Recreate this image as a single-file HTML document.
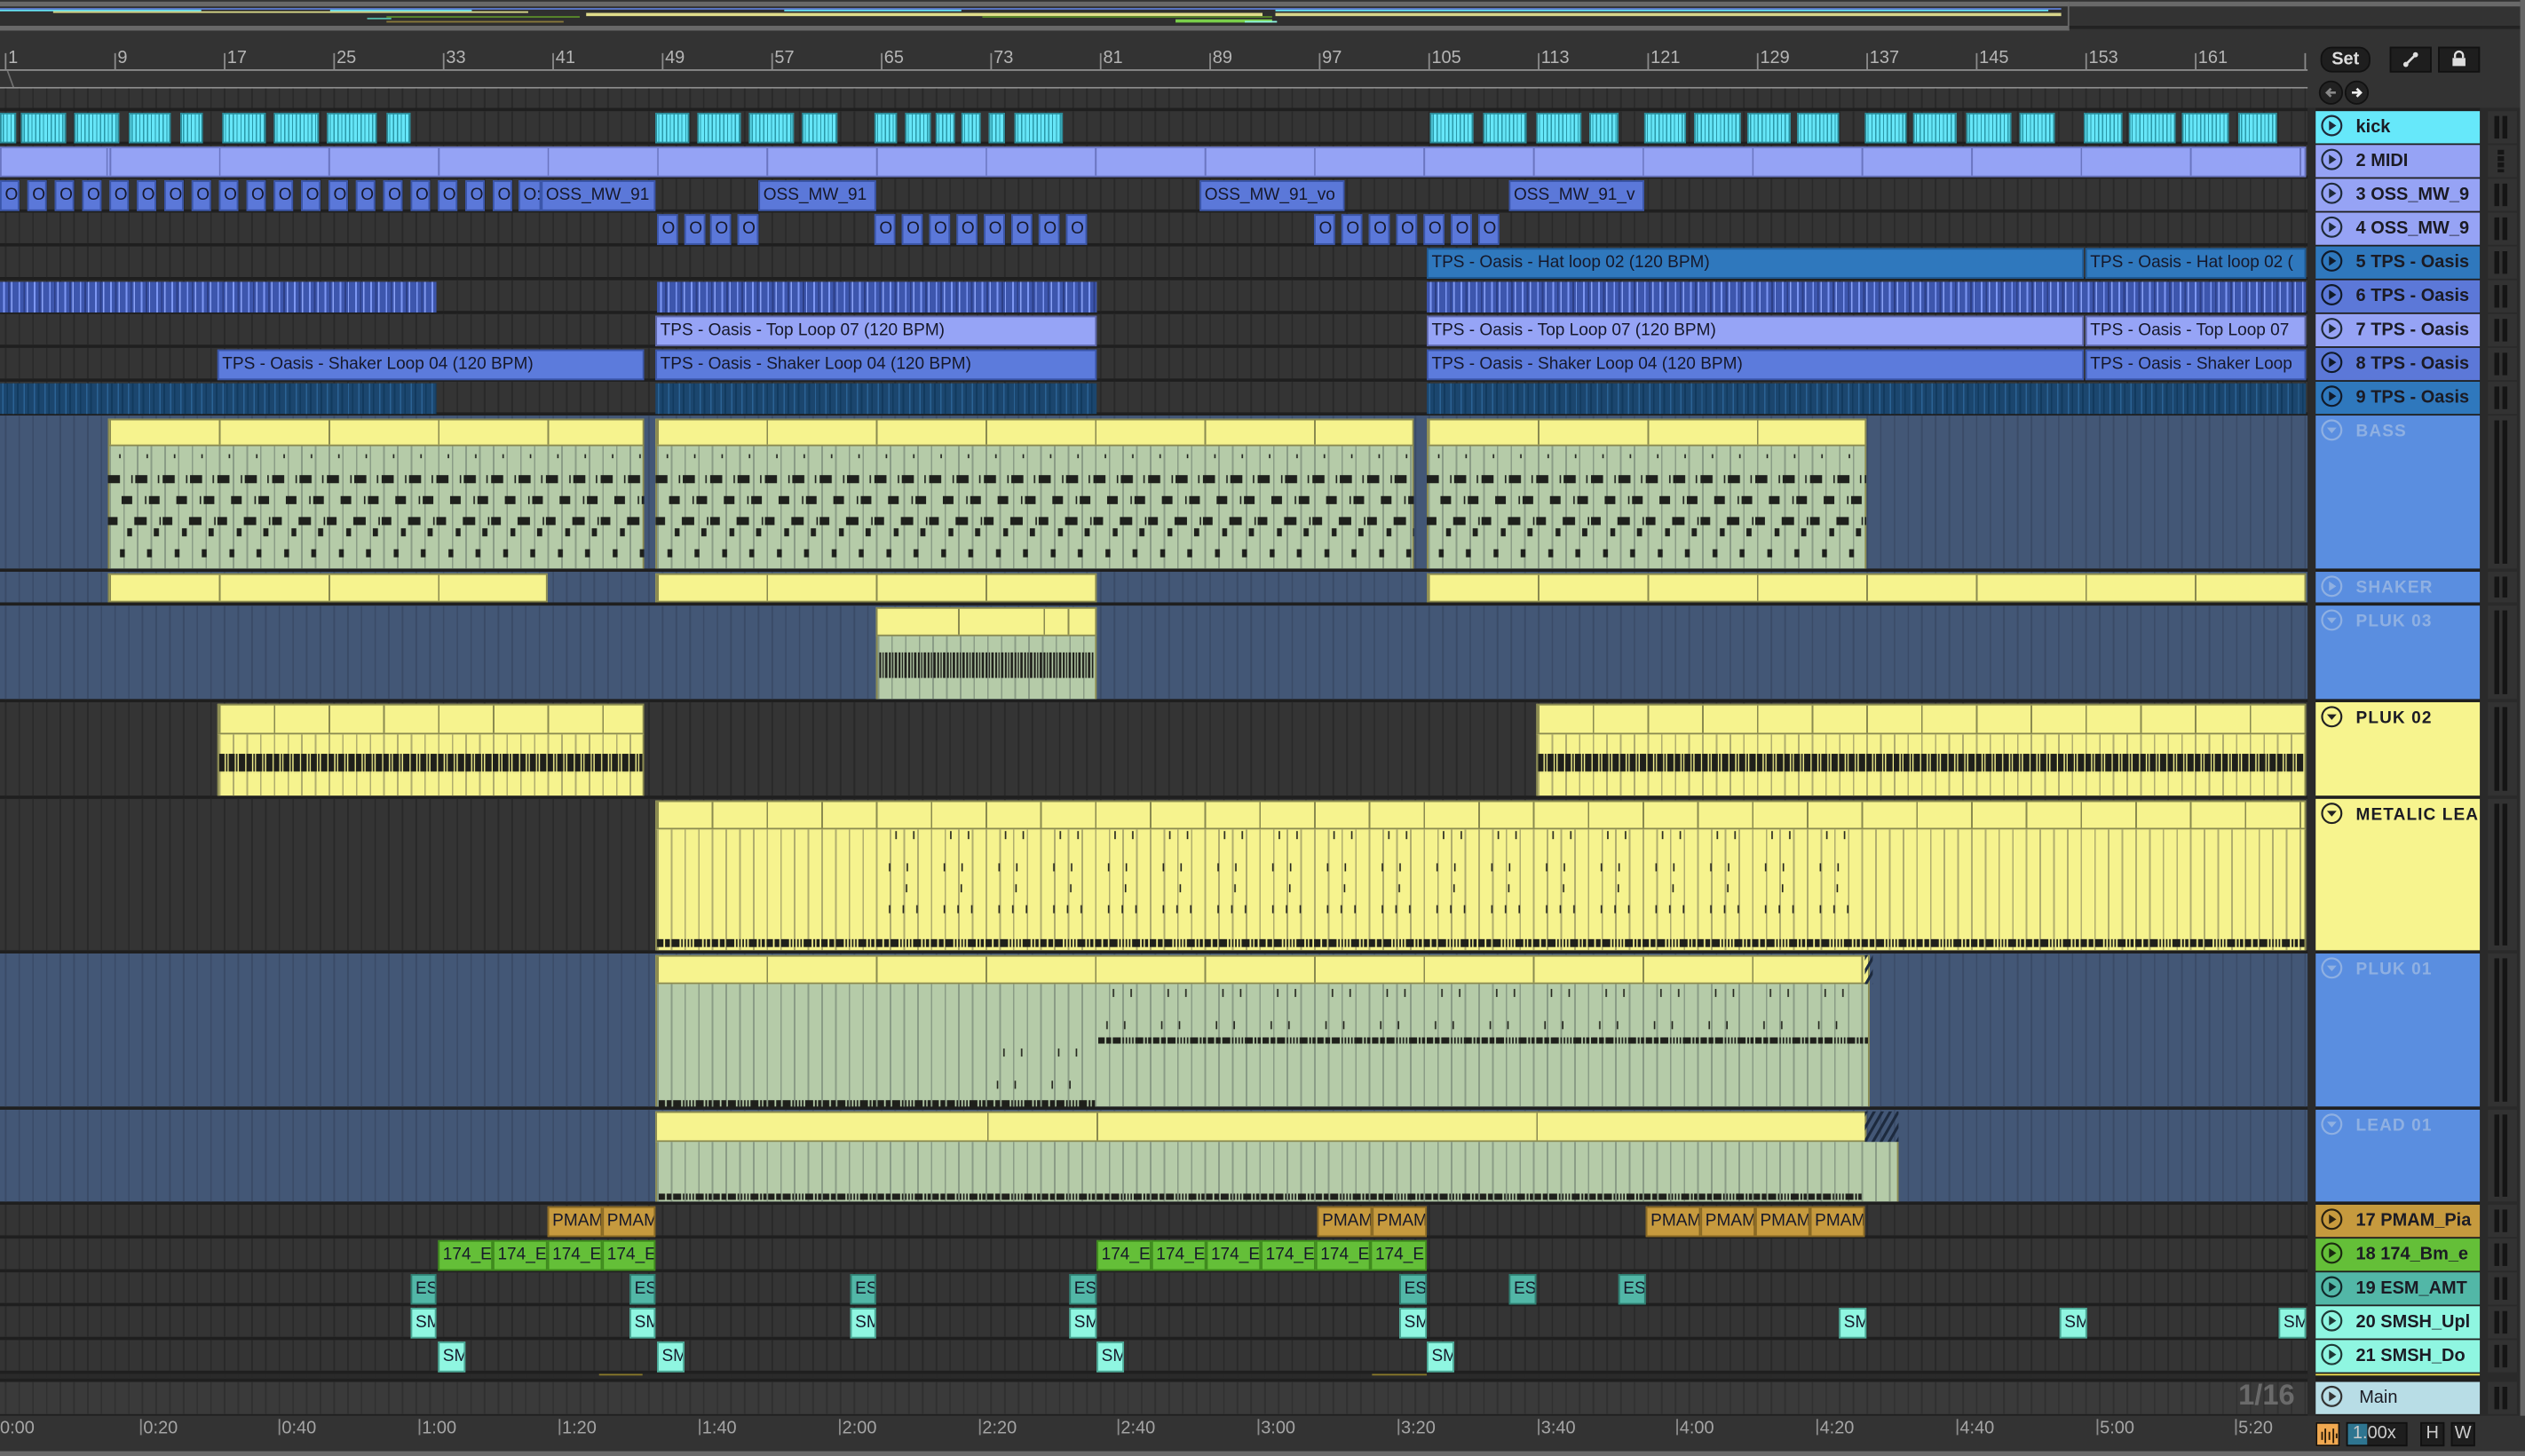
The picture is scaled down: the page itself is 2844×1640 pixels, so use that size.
<!DOCTYPE html>
<html><head><meta charset="utf-8"><style>
html,body{margin:0;padding:0;background:#2c2c2c;overflow:hidden;width:2844px;height:1640px}
#s{position:absolute;left:0;top:0;width:1568px;height:904px;transform:scale(1.81378,1.81416);transform-origin:0 0;font-family:"Liberation Sans",sans-serif;background:#2b2b2b;overflow:hidden}
.a{position:absolute}
.ln{position:absolute;left:0;width:1433px;background-color:#343434;background-image:repeating-linear-gradient(90deg,#292929 0 1px,transparent 1px 8.5px);background-position:3px 0}
.lb{position:absolute;left:0;width:1433px;background-color:#435776;background-image:repeating-linear-gradient(90deg,#3a4b67 0 1px,transparent 1px 8.5px);background-position:3px 0}
.c{position:absolute;box-sizing:border-box;font-size:10.5px;line-height:17px;color:#16182a;white-space:nowrap;overflow:hidden;padding-left:2px;height:19px}
.k{position:absolute;height:19px;background:repeating-linear-gradient(90deg,#66e6f8 0 1.7px,#2b98a8 1.7px 2.4px);box-shadow:inset 0 0 0 1px #2a8a98}
.o3{background:#5b78d9;border:1px solid #3a55a8}
.lav{background:#96a4f6;border:1px solid #5c66a8}
.tb{background:#2f78bd;border:1px solid #1f5a94}
.mb8{background:#5c7bdc;border:1px solid #3a55a8}
.w6{position:absolute;height:19px;background-color:#3d56ad;background-image:repeating-linear-gradient(90deg,transparent 0 2px,#7d97f2 2px 3px,transparent 3px 5px,#2c3f86 5px 6px,transparent 6px 7px,#8aa2f6 7px 7.8px,transparent 7.8px 9.5px)}
.w9{position:absolute;height:19px;background-color:#1b466e;background-image:repeating-linear-gradient(90deg,transparent 0 1.5px,#2b6294 1.5px 2.3px,transparent 2.3px 4px,#123a5e 4px 5px,transparent 5px 6.5px)}
.yh{position:absolute;box-sizing:border-box;background-color:#f6f38e;border:1px solid #8a8a50;background-image:repeating-linear-gradient(90deg,#8a8a50 0 1px,transparent 1px 68px)}
.gb{position:absolute;box-sizing:border-box;background-color:#b5cba8;border-left:1px solid #8a8a50;border-right:1px solid #8a8a50;background-image:repeating-linear-gradient(90deg,#8a9c86 0 1px,transparent 1px 8.5px)}
.yb{position:absolute;box-sizing:border-box;background-color:#f6f38e;border-left:1px solid #8a8a50;border-right:1px solid #8a8a50;background-image:repeating-linear-gradient(90deg,#b0ad6e 0 1px,transparent 1px 8.5px)}
.hd{position:absolute;left:1438px;width:102px;box-sizing:border-box;font-size:11px;font-weight:bold;color:#1b1b24;padding-left:25px;line-height:17px;white-space:nowrap;overflow:hidden}
.hd svg{position:absolute;left:3px;top:2px}
.hg{color:#8fb0e2;letter-spacing:.6px;font-size:10.5px}
.hy{letter-spacing:.6px;font-size:10.5px}
.rs{position:absolute;left:1545px;width:18px;background:#323232}
.rs i{position:absolute;top:3px;bottom:3px;width:3px;background:#151515}
.pm{background:#c69a3e;border:1px solid #8a6a25}
.g18{background:#64bf38;border:1px solid #3f8a1e}
.es{background:#52b7a7;border:1px solid #2f7f72}
.sm{background:#8ff6e1;border:1px solid #4aa896}
.rl{position:absolute;top:30px;font-size:11px;color:#b5b5b5}
.tk{position:absolute;top:33px;height:10px;width:1px;background:#8a8a8a}
.tl{position:absolute;top:881px;font-size:11px;color:#a5a5a5}
.tt{position:absolute;top:881px;height:10px;width:1px;background:#8a8a8a}
</style></head><body><div id="s">
<svg width="0" height="0" style="position:absolute"><defs>
<pattern id="pBass" width="34" height="76" patternUnits="userSpaceOnUse">
<g fill="#1e201c"><rect x="7" y="5" width=".9" height="2.5"/><rect x="24" y="5" width=".9" height="2.5"/>
<rect x="0" y="18" width="7.5" height="5"/><rect x="14.5" y="18" width=".9" height="5"/><rect x="17" y="18" width="7.5" height="5"/><rect x="31" y="18" width=".9" height="5"/>
<rect x="8.5" y="31" width="6.6" height="5"/><rect x="23" y="31" width=".9" height="5"/><rect x="25.5" y="31" width="6.6" height="5"/>
<rect x="16.4" y="44" width="7.7" height="5"/><rect x="32" y="44" width=".9" height="5"/><rect x="0" y="44" width="6" height="5"/>
<rect x="28.5" y="51" width="3.2" height="5"/><rect x="12" y="51" width="3" height="5"/>
<rect x="24.3" y="64" width="3" height="5"/><rect x="7.5" y="64" width="3" height="5"/></g></pattern>
<pattern id="pMet" width="34" height="76" patternUnits="userSpaceOnUse">
<g fill="#23241d"><rect x="5" y="3" width=".9" height="5"/><rect x="16" y="3" width=".9" height="5"/>
<rect x="1" y="23" width=".9" height="5"/><rect x="12" y="23" width=".9" height="5"/>
<rect x="11.5" y="36" width=".9" height="5"/>
<rect x="1" y="49" width=".9" height="5"/><rect x="9.5" y="49" width=".9" height="5"/><rect x="18" y="49" width=".9" height="5"/></g></pattern>
<pattern id="pBand" width="34" height="6" patternUnits="userSpaceOnUse">
<g fill="#1f201b"><rect x="0" y="0" width="4" height="5"/><rect x="5" y="0" width="3" height="5"/><rect x="9" y="0" width="5" height="5"/><rect x="15" y="0" width="1" height="5"/><rect x="17" y="0" width="1" height="5"/><rect x="19" y="0" width="1" height="5"/><rect x="21" y="0" width="1" height="5"/><rect x="23" y="0" width="5" height="5"/><rect x="29" y="0" width="1.2" height="5"/><rect x="31" y="0" width="2" height="5"/></g></pattern>
<pattern id="pBand2" width="17" height="12" patternUnits="userSpaceOnUse">
<g fill="#1f201b"><rect x="0" y="0" width="3.5" height="11"/><rect x="4.3" y="0" width="1" height="11"/><rect x="6" y="0" width="3.8" height="11"/><rect x="10.5" y="0" width="1" height="11"/><rect x="12.3" y="0" width="4" height="11"/></g></pattern>
<pattern id="pDense" width="6" height="16" patternUnits="userSpaceOnUse">
<g fill="#1f201b"><rect x="0" y="0" width="1.2" height="16"/><rect x="2" y="0" width=".8" height="16"/><rect x="3.6" y="0" width="1.5" height="16"/></g></pattern>
<pattern id="pHat" width="5" height="22" patternUnits="userSpaceOnUse" patternTransform="skewX(-30)"><rect width="2" height="22" fill="#1d2a3e"/></pattern>
</defs></svg>

<!-- overview -->
<div class="a" style="left:0;top:0;width:1568px;height:67px;background:#333"></div>
<div class="a" style="left:0;top:1;width:1285px;height:18px;top:1px;background:#2f2f2f;border-top:3px solid #696969;border-bottom:3px solid #696969;box-sizing:border-box;border-right:1px solid #696969"></div>
<div class="a" style="left:1285px;top:1px;width:280px;height:3px;background:#696969"></div>
<div class="a" style="left:1285px;top:16px;width:283px;height:2px;background:#222"></div>
<div class="a" style="left:0;top:5px;width:1280px;height:1px;background:#5b7ad0"></div>
<div class="a" style="left:0;top:6px;width:125px;height:1px;background:#66e5f8"></div>
<div class="a" style="left:205px;top:6px;width:88px;height:1px;background:#66e5f8"></div>
<div class="a" style="left:487px;top:6px;width:110px;height:1px;background:#66e5f8"></div>
<div class="a" style="left:792px;top:6px;width:480px;height:1px;background:#66e5f8"></div>
<div class="a" style="left:33px;top:7px;width:295px;height:1px;background:#dada8a"></div>
<div class="a" style="left:364px;top:8px;width:420px;height:2px;background:#e0dc8a"></div>
<div class="a" style="left:792px;top:8px;width:488px;height:2px;background:#d8d48a"></div>
<div class="a" style="left:240px;top:10px;width:120px;height:1px;background:#5a8a2a"></div>
<div class="a" style="left:610px;top:10px;width:180px;height:1px;background:#5a8a2a"></div>
<div class="a" style="left:240px;top:13px;width:110px;height:1px;background:#8a7a3a"></div>
<div class="a" style="left:730px;top:12px;width:60px;height:2px;background:#7ad04a"></div>
<div class="a" style="left:228px;top:11px;width:15px;height:1px;background:#52b7a7"></div>
<div class="a" style="left:773px;top:13px;width:20px;height:1px;background:#8ff6e1"></div>

<!-- ruler -->
<div class="a" style="left:0;top:43px;width:1433px;height:1px;background:#8c8c8c"></div>
<div class="a" style="left:0;top:54px;width:1433px;height:1px;background:#8c8c8c"></div>
<div class="a" style="left:0;top:44px;width:6px;height:10px;border-right:1px solid #999;transform:skewX(20deg);opacity:.6"></div>
<div class="ln" style="top:55px;height:12px"></div>
<div class="tk" style="left:3px"></div><div class="rl" style="left:5px">1</div>
<div class="tk" style="left:71px"></div><div class="rl" style="left:73px">9</div>
<div class="tk" style="left:139px"></div><div class="rl" style="left:141px">17</div>
<div class="tk" style="left:207px"></div><div class="rl" style="left:209px">25</div>
<div class="tk" style="left:275px"></div><div class="rl" style="left:277px">33</div>
<div class="tk" style="left:343px"></div><div class="rl" style="left:345px">41</div>
<div class="tk" style="left:411px"></div><div class="rl" style="left:413px">49</div>
<div class="tk" style="left:479px"></div><div class="rl" style="left:481px">57</div>
<div class="tk" style="left:547px"></div><div class="rl" style="left:549px">65</div>
<div class="tk" style="left:615px"></div><div class="rl" style="left:617px">73</div>
<div class="tk" style="left:683px"></div><div class="rl" style="left:685px">81</div>
<div class="tk" style="left:751px"></div><div class="rl" style="left:753px">89</div>
<div class="tk" style="left:819px"></div><div class="rl" style="left:821px">97</div>
<div class="tk" style="left:887px"></div><div class="rl" style="left:889px">105</div>
<div class="tk" style="left:955px"></div><div class="rl" style="left:957px">113</div>
<div class="tk" style="left:1023px"></div><div class="rl" style="left:1025px">121</div>
<div class="tk" style="left:1091px"></div><div class="rl" style="left:1093px">129</div>
<div class="tk" style="left:1159px"></div><div class="rl" style="left:1161px">137</div>
<div class="tk" style="left:1227px"></div><div class="rl" style="left:1229px">145</div>
<div class="tk" style="left:1295px"></div><div class="rl" style="left:1297px">153</div>
<div class="tk" style="left:1363px"></div><div class="rl" style="left:1365px">161</div>
<div class="tk" style="left:1431px"></div>

<!-- top right controls -->
<div class="a" style="left:1441px;top:29px;width:29px;height:14px;border-radius:7px;background:#1e1e1e;border:1px solid #111;color:#ddd;font-size:11px;font-weight:bold;text-align:center;line-height:14px">Set</div>
<div class="a" style="left:1484px;top:29px;width:24px;height:14px;background:#1e1e1e;border:1px solid #111"><svg width="24" height="14"><line x1="9" y1="10" x2="15" y2="4" stroke="#ddd" stroke-width="1.5"/><circle cx="9" cy="10" r="1.6" fill="#ddd"/><circle cx="15" cy="4" r="1.6" fill="#ddd"/></svg></div>
<div class="a" style="left:1514px;top:29px;width:24px;height:14px;background:#1e1e1e;border:1px solid #111"><svg width="24" height="14"><rect x="8" y="6" width="8" height="5" fill="#ddd"/><path d="M9.5 6 V4.5 a2.5 2.5 0 0 1 5 0 V6" stroke="#ddd" stroke-width="1.3" fill="none"/></svg></div>
<div class="a" style="left:1440px;top:50px;width:13px;height:13px;border-radius:50%;background:#222;border:1px solid #111"><svg width="13" height="13"><path d="M9.5 6.5 H4 M6.5 4 L4 6.5 L6.5 9" stroke="#888" stroke-width="1.5" fill="none"/></svg></div>
<div class="a" style="left:1456px;top:50px;width:13px;height:13px;border-radius:50%;background:#222;border:1px solid #111"><svg width="13" height="13"><path d="M3.5 6.5 H9 M6.5 4 L9 6.5 L6.5 9" stroke="#eee" stroke-width="1.5" fill="none"/></svg></div>

<!-- area background behind lanes -->
<div class="a" style="left:0;top:67px;width:1568px;height:812px;background:#1f1f1f"></div>
<div class="a" style="left:1433px;top:67px;width:5px;height:812px;background:#2a2a2a"></div>

<!-- lanes -->
<div class="ln" style="top:69px;height:19px"></div>
<div class="ln" style="top:90px;height:19px"></div>
<div class="ln" style="top:111px;height:19px"></div>
<div class="ln" style="top:132px;height:19px"></div>
<div class="ln" style="top:153px;height:19px"></div>
<div class="ln" style="top:174px;height:19px"></div>
<div class="ln" style="top:195px;height:19px"></div>
<div class="ln" style="top:216px;height:19px"></div>
<div class="ln" style="top:237px;height:19px"></div>
<div class="lb" style="top:258px;height:95px"></div>
<div class="lb" style="top:355px;height:19px"></div>
<div class="lb" style="top:376px;height:58px"></div>
<div class="ln" style="top:436px;height:58px"></div>
<div class="ln" style="top:496px;height:94px"></div>
<div class="lb" style="top:592px;height:95px"></div>
<div class="lb" style="top:689px;height:57px"></div>
<div class="ln" style="top:748px;height:19px"></div>
<div class="ln" style="top:769px;height:19px"></div>
<div class="ln" style="top:790px;height:19px"></div>
<div class="ln" style="top:811px;height:19px"></div>
<div class="ln" style="top:832px;height:19px"></div>
<div class="ln" style="top:853px;height:3px;background-color:#2a2a2a"></div>
<div class="ln" style="top:858px;height:20px;background-color:#3a3a3a;background-image:repeating-linear-gradient(90deg,#303030 0 1px,transparent 1px 8.5px)"></div>
<div class="a" style="left:372px;top:853px;width:27px;height:1px;background:#8a7a2a"></div>
<div class="a" style="left:852px;top:853px;width:34px;height:1px;background:#8a7a2a"></div>

<!-- kick -->
<div class="k" style="top:70px;left:0;width:10px"></div><div class="k" style="top:70px;left:13px;width:28px"></div><div class="k" style="top:70px;left:46px;width:28px"></div><div class="k" style="top:70px;left:80px;width:26px"></div><div class="k" style="top:70px;left:112px;width:14px"></div><div class="k" style="top:70px;left:138px;width:27px"></div><div class="k" style="top:70px;left:170px;width:28px"></div><div class="k" style="top:70px;left:203px;width:31px"></div><div class="k" style="top:70px;left:240px;width:15px"></div>
<div class="k" style="top:70px;left:407px;width:21px"></div><div class="k" style="top:70px;left:433px;width:27px"></div><div class="k" style="top:70px;left:465px;width:28px"></div><div class="k" style="top:70px;left:498px;width:22px"></div><div class="k" style="top:70px;left:543px;width:14px"></div><div class="k" style="top:70px;left:562px;width:16px"></div><div class="k" style="top:70px;left:581px;width:12px"></div><div class="k" style="top:70px;left:597px;width:12px"></div><div class="k" style="top:70px;left:614px;width:10px"></div><div class="k" style="top:70px;left:630px;width:30px"></div>
<div class="k" style="top:70px;left:888px;width:27px"></div><div class="k" style="top:70px;left:921px;width:27px"></div><div class="k" style="top:70px;left:954px;width:28px"></div><div class="k" style="top:70px;left:987px;width:18px"></div><div class="k" style="top:70px;left:1021px;width:26px"></div><div class="k" style="top:70px;left:1052px;width:29px"></div><div class="k" style="top:70px;left:1085px;width:27px"></div><div class="k" style="top:70px;left:1116px;width:26px"></div><div class="k" style="top:70px;left:1158px;width:26px"></div><div class="k" style="top:70px;left:1188px;width:27px"></div><div class="k" style="top:70px;left:1221px;width:28px"></div><div class="k" style="top:70px;left:1254px;width:22px"></div><div class="k" style="top:70px;left:1294px;width:24px"></div><div class="k" style="top:70px;left:1322px;width:29px"></div><div class="k" style="top:70px;left:1355px;width:29px"></div><div class="k" style="top:70px;left:1390px;width:24px"></div>

<!-- 2 MIDI -->
<div class="c" style="top:91px;left:0;width:1432px;background-color:#95a3f5;border:1px solid #6a75c0;background-image:repeating-linear-gradient(90deg,#6a75c0 0 1px,transparent 1px 68px);background-position:67px 0"></div>

<!-- 3 OSS -->
<div class="c o3" style="top:112px;left:0;width:12px">O:</div>
<div class="c o3" style="top:112px;left:17px;width:12px">O:</div>
<div class="c o3" style="top:112px;left:34px;width:12px">O:</div>
<div class="c o3" style="top:112px;left:51px;width:12px">O:</div>
<div class="c o3" style="top:112px;left:68px;width:12px">O:</div>
<div class="c o3" style="top:112px;left:85px;width:12px">O:</div>
<div class="c o3" style="top:112px;left:102px;width:12px">O:</div>
<div class="c o3" style="top:112px;left:119px;width:12px">O:</div>
<div class="c o3" style="top:112px;left:136px;width:12px">O</div>
<div class="c o3" style="top:112px;left:153px;width:12px">O:</div>
<div class="c o3" style="top:112px;left:170px;width:12px">O</div>
<div class="c o3" style="top:112px;left:187px;width:12px">O:</div>
<div class="c o3" style="top:112px;left:204px;width:12px">O</div>
<div class="c o3" style="top:112px;left:221px;width:12px">O:</div>
<div class="c o3" style="top:112px;left:238px;width:12px">O</div>
<div class="c o3" style="top:112px;left:255px;width:12px">O:</div>
<div class="c o3" style="top:112px;left:272px;width:12px">O</div>
<div class="c o3" style="top:112px;left:289px;width:12px">O:</div>
<div class="c o3" style="top:112px;left:306px;width:12px">O</div>
<div class="c o3" style="top:112px;left:322px;width:14px">O:</div>
<div class="c o3" style="top:112px;left:336px;width:71px">OSS_MW_91</div>
<div class="c o3" style="top:112px;left:471px;width:73px">OSS_MW_91</div>
<div class="c o3" style="top:112px;left:745px;width:90px">OSS_MW_91_vo</div>
<div class="c o3" style="top:112px;left:937px;width:84px">OSS_MW_91_v</div>

<!-- 4 OSS -->
<div class="c o3" style="top:133px;left:408px;width:13px">O:</div>
<div class="c o3" style="top:133px;left:425px;width:13px">O</div>
<div class="c o3" style="top:133px;left:441px;width:13px">O:</div>
<div class="c o3" style="top:133px;left:458px;width:13px">O</div>
<div class="c o3" style="top:133px;left:543px;width:13px">O:</div>
<div class="c o3" style="top:133px;left:560px;width:13px">O</div>
<div class="c o3" style="top:133px;left:577px;width:13px">O:</div>
<div class="c o3" style="top:133px;left:594px;width:13px">O</div>
<div class="c o3" style="top:133px;left:611px;width:13px">O:</div>
<div class="c o3" style="top:133px;left:628px;width:13px">O</div>
<div class="c o3" style="top:133px;left:645px;width:13px">O:</div>
<div class="c o3" style="top:133px;left:662px;width:13px">O:</div>
<div class="c o3" style="top:133px;left:816px;width:13px">O</div>
<div class="c o3" style="top:133px;left:833px;width:13px">O:</div>
<div class="c o3" style="top:133px;left:850px;width:13px">O</div>
<div class="c o3" style="top:133px;left:867px;width:13px">O:</div>
<div class="c o3" style="top:133px;left:884px;width:13px">O</div>
<div class="c o3" style="top:133px;left:901px;width:13px">O</div>
<div class="c o3" style="top:133px;left:918px;width:13px">O</div>

<!-- 5 -->
<div class="c tb" style="top:154px;left:886px;width:408px">TPS - Oasis - Hat loop 02 (120 BPM)</div>
<div class="c tb" style="top:154px;left:1295px;width:137px">TPS - Oasis - Hat loop 02 (</div>
<!-- 6 -->
<div class="w6" style="top:175px;left:0;width:271px"></div>
<div class="w6" style="top:175px;left:408px;width:273px"></div>
<div class="w6" style="top:175px;left:886px;width:546px"></div>
<!-- 7 -->
<div class="c lav" style="top:196px;left:407px;width:274px">TPS - Oasis - Top Loop 07 (120 BPM)</div>
<div class="c lav" style="top:196px;left:886px;width:408px">TPS - Oasis - Top Loop 07 (120 BPM)</div>
<div class="c lav" style="top:196px;left:1295px;width:137px">TPS - Oasis - Top Loop 07</div>
<!-- 8 -->
<div class="c mb8" style="top:217px;left:135px;width:265px">TPS - Oasis - Shaker Loop 04 (120 BPM)</div>
<div class="c mb8" style="top:217px;left:407px;width:274px">TPS - Oasis - Shaker Loop 04 (120 BPM)</div>
<div class="c mb8" style="top:217px;left:886px;width:408px">TPS - Oasis - Shaker Loop 04 (120 BPM)</div>
<div class="c mb8" style="top:217px;left:1295px;width:137px">TPS - Oasis - Shaker Loop</div>
<!-- 9 -->
<div class="w9" style="top:238px;left:0;width:271px"></div>
<div class="w9" style="top:238px;left:407px;width:274px"></div>
<div class="w9" style="top:238px;left:886px;width:546px"></div>

<!-- BASS -->
<div class="yh" style="left:67px;top:260px;width:333px;height:17px"></div>
<div class="gb" style="left:67px;top:277px;width:333px;height:76px"></div>
<svg class="a" style="left:67px;top:277px" width="333" height="76"><rect width="333" height="76" fill="url(#pBass)"/></svg>
<div class="yh" style="left:407px;top:260px;width:471px;height:17px"></div>
<div class="gb" style="left:407px;top:277px;width:471px;height:76px"></div>
<svg class="a" style="left:407px;top:277px" width="471" height="76"><rect width="471" height="76" fill="url(#pBass)"/></svg>
<div class="yh" style="left:886px;top:260px;width:273px;height:17px"></div>
<div class="gb" style="left:886px;top:277px;width:273px;height:76px"></div>
<svg class="a" style="left:886px;top:277px" width="273" height="76"><rect width="273" height="76" fill="url(#pBass)"/></svg>

<!-- SHAKER -->
<div class="yh" style="left:67px;top:356px;width:273px;height:18px"></div>
<div class="yh" style="left:407px;top:356px;width:274px;height:18px"></div>
<div class="yh" style="left:886px;top:356px;width:546px;height:18px"></div>

<!-- PLUK 03 -->
<div class="yh" style="left:544px;top:377px;width:137px;height:18px;background-image:linear-gradient(90deg,transparent 0 50px,#8a8a50 50px 51px,transparent 51px 103px,#8a8a50 103px 104px,transparent 104px 118px,#8a8a50 118px 119px,transparent 119px)"></div>
<div class="gb" style="left:544px;top:395px;width:137px;height:39px"></div>
<svg class="a" style="left:546px;top:405px" width="133" height="16"><rect width="133" height="16" fill="url(#pDense)"/></svg>

<!-- PLUK 02 -->
<div class="yh" style="left:135px;top:437px;width:265px;height:19px;background-image:repeating-linear-gradient(90deg,#8a8a50 0 1px,transparent 1px 34px)"></div>
<div class="yb" style="left:135px;top:456px;width:265px;height:38px"></div>
<svg class="a" style="left:136px;top:468px" width="263" height="12"><rect width="263" height="12" fill="url(#pBand2)"/></svg>
<div class="yh" style="left:954px;top:437px;width:478px;height:19px;background-image:repeating-linear-gradient(90deg,#8a8a50 0 1px,transparent 1px 34px)"></div>
<div class="yb" style="left:954px;top:456px;width:478px;height:38px"></div>
<svg class="a" style="left:955px;top:468px" width="476" height="12"><rect width="476" height="12" fill="url(#pBand2)"/></svg>

<!-- METALIC -->
<div class="yh" style="left:407px;top:497px;width:1025px;height:18px;background-image:repeating-linear-gradient(90deg,#8a8a50 0 1px,transparent 1px 34px)"></div>
<div class="yb" style="left:407px;top:515px;width:1025px;height:75px"></div>
<svg class="a" style="left:551px;top:513px" width="330" height="76"><rect width="330" height="76" fill="url(#pMet)"/></svg>
<svg class="a" style="left:891px;top:513px" width="262" height="76"><rect width="262" height="76" fill="url(#pMet)"/></svg>
<svg class="a" style="left:408px;top:583px" width="1023" height="6"><rect width="1023" height="6" fill="url(#pBand)"/></svg>

<!-- PLUK 01 -->
<div class="yh" style="left:407px;top:593px;width:754px;height:18px"></div>
<div class="gb" style="left:407px;top:611px;width:754px;height:76px"></div>
<svg class="a" style="left:686px;top:611px" width="473" height="30"><rect width="473" height="30" fill="url(#pMet)"/></svg>
<svg class="a" style="left:682px;top:644px" width="478" height="4"><rect width="478" height="4" fill="url(#pBand)"/></svg>
<svg class="a" style="left:618px;top:648px" width="62" height="30"><rect width="62" height="30" fill="url(#pMet)"/></svg>
<svg class="a" style="left:409px;top:683px" width="272" height="5"><rect width="272" height="5" fill="url(#pBand)"/></svg>
<svg class="a" style="left:1158px;top:593px" width="5" height="18"><rect width="5" height="18" fill="url(#pHat)"/></svg>

<!-- LEAD 01 -->
<div class="yh" style="left:407px;top:690px;width:752px;height:19px;background-image:linear-gradient(90deg,transparent 0 205px,#8a8a50 205px 206px,transparent 206px 273px,#8a8a50 273px 274px,transparent 274px 546px,#8a8a50 546px 547px,transparent 547px)"></div>
<div class="gb" style="left:407px;top:709px;width:772px;height:37px"></div>
<svg class="a" style="left:1158px;top:690px" width="21" height="19"><rect width="21" height="19" fill="url(#pHat)"/></svg>
<svg class="a" style="left:409px;top:741px" width="748" height="4"><rect width="748" height="4" fill="url(#pBand)"/></svg>

<!-- 17 PMAM -->
<div class="c pm" style="top:749px;left:340px;width:34px">PMAM</div>
<div class="c pm" style="top:749px;left:374px;width:33px">PMAM</div>
<div class="c pm" style="top:749px;left:818px;width:34px">PMAM</div>
<div class="c pm" style="top:749px;left:852px;width:34px">PMAM</div>
<div class="c pm" style="top:749px;left:1022px;width:34px">PMAM</div>
<div class="c pm" style="top:749px;left:1056px;width:34px">PMAM</div>
<div class="c pm" style="top:749px;left:1090px;width:34px">PMAM</div>
<div class="c pm" style="top:749px;left:1124px;width:34px">PMAM</div>
<!-- 18 -->
<div class="c g18" style="top:770px;left:272px;width:34px">174_E</div>
<div class="c g18" style="top:770px;left:306px;width:34px">174_E</div>
<div class="c g18" style="top:770px;left:340px;width:34px">174_E</div>
<div class="c g18" style="top:770px;left:374px;width:33px">174_E</div>
<div class="c g18" style="top:770px;left:681px;width:34px">174_E</div>
<div class="c g18" style="top:770px;left:715px;width:34px">174_E</div>
<div class="c g18" style="top:770px;left:749px;width:34px">174_E</div>
<div class="c g18" style="top:770px;left:783px;width:34px">174_E</div>
<div class="c g18" style="top:770px;left:817px;width:34px">174_E</div>
<div class="c g18" style="top:770px;left:851px;width:35px">174_E</div>
<!-- 19 -->
<div class="c es" style="top:791px;left:255px;width:16px">ES</div>
<div class="c es" style="top:791px;left:391px;width:16px">ES</div>
<div class="c es" style="top:791px;left:528px;width:16px">ES</div>
<div class="c es" style="top:791px;left:664px;width:17px">ES</div>
<div class="c es" style="top:791px;left:869px;width:17px">ES</div>
<div class="c es" style="top:791px;left:937px;width:17px">ES</div>
<div class="c es" style="top:791px;left:1005px;width:17px">ES</div>
<!-- 20 -->
<div class="c sm" style="top:812px;left:255px;width:16px">SM</div>
<div class="c sm" style="top:812px;left:391px;width:16px">SM</div>
<div class="c sm" style="top:812px;left:528px;width:16px">SM</div>
<div class="c sm" style="top:812px;left:664px;width:17px">SM</div>
<div class="c sm" style="top:812px;left:869px;width:17px">SM</div>
<div class="c sm" style="top:812px;left:1142px;width:17px">SM</div>
<div class="c sm" style="top:812px;left:1279px;width:17px">SM</div>
<div class="c sm" style="top:812px;left:1415px;width:17px">SM</div>
<!-- 21 -->
<div class="c sm" style="top:833px;left:272px;width:17px">SM</div>
<div class="c sm" style="top:833px;left:408px;width:17px">SM</div>
<div class="c sm" style="top:833px;left:681px;width:17px">SM</div>
<div class="c sm" style="top:833px;left:886px;width:17px">SM</div>

<div class="a" style="left:1390px;top:856px;font-size:18px;font-weight:bold;color:#6a6a6a">1/16</div>

<!-- headers -->
<div class="hd" style="top:69px;height:20px;background:#66e8fa;line-height:20px"><svg width="14" height="14"><circle cx="7" cy="7" r="6" fill="none" stroke="#1e2a3a" stroke-width="1.2"/><path d="M5.3 4 L9.8 7 L5.3 10Z" fill="#1e2a3a"/></svg>kick</div>
<div class="hd" style="top:90px;height:20px;background:#96a3f5;line-height:20px"><svg width="14" height="14"><circle cx="7" cy="7" r="6" fill="none" stroke="#1e2a3a" stroke-width="1.2"/><path d="M5.3 4 L9.8 7 L5.3 10Z" fill="#1e2a3a"/></svg>2 MIDI</div>
<div class="hd" style="top:111px;height:20px;background:#96a3f5;line-height:20px"><svg width="14" height="14"><circle cx="7" cy="7" r="6" fill="none" stroke="#1e2a3a" stroke-width="1.2"/><path d="M5.3 4 L9.8 7 L5.3 10Z" fill="#1e2a3a"/></svg>3 OSS_MW_9</div>
<div class="hd" style="top:132px;height:20px;background:#96a3f5;line-height:20px"><svg width="14" height="14"><circle cx="7" cy="7" r="6" fill="none" stroke="#1e2a3a" stroke-width="1.2"/><path d="M5.3 4 L9.8 7 L5.3 10Z" fill="#1e2a3a"/></svg>4 OSS_MW_9</div>
<div class="hd" style="top:153px;height:20px;background:#2f78bd;line-height:20px"><svg width="14" height="14"><circle cx="7" cy="7" r="6" fill="none" stroke="#101a2a" stroke-width="1.2"/><path d="M5.3 4 L9.8 7 L5.3 10Z" fill="#101a2a"/></svg>5 TPS - Oasis</div>
<div class="hd" style="top:174px;height:20px;background:#5c78d8;line-height:20px"><svg width="14" height="14"><circle cx="7" cy="7" r="6" fill="none" stroke="#101a2a" stroke-width="1.2"/><path d="M5.3 4 L9.8 7 L5.3 10Z" fill="#101a2a"/></svg>6 TPS - Oasis</div>
<div class="hd" style="top:195px;height:20px;background:#96a3f5;line-height:20px"><svg width="14" height="14"><circle cx="7" cy="7" r="6" fill="none" stroke="#1e2a3a" stroke-width="1.2"/><path d="M5.3 4 L9.8 7 L5.3 10Z" fill="#1e2a3a"/></svg>7 TPS - Oasis</div>
<div class="hd" style="top:216px;height:20px;background:#5c78d8;line-height:20px"><svg width="14" height="14"><circle cx="7" cy="7" r="6" fill="none" stroke="#101a2a" stroke-width="1.2"/><path d="M5.3 4 L9.8 7 L5.3 10Z" fill="#101a2a"/></svg>8 TPS - Oasis</div>
<div class="hd" style="top:237px;height:20px;background:#2f78bd;line-height:20px"><svg width="14" height="14"><circle cx="7" cy="7" r="6" fill="none" stroke="#101a2a" stroke-width="1.2"/><path d="M5.3 4 L9.8 7 L5.3 10Z" fill="#101a2a"/></svg>9 TPS - Oasis</div>
<div class="hd hg" style="top:258px;height:95px;background:#5a8ee0;line-height:20px"><svg width="14" height="14"><circle cx="7" cy="7" r="6" fill="none" stroke="#8fb0e2" stroke-width="1.2"/><path d="M4 5.5 L10 5.5 L7 9Z" fill="#8fb0e2"/></svg>BASS</div>
<div class="hd hg" style="top:355px;height:19px;background:#5a8ee0;line-height:20px"><svg width="14" height="14"><circle cx="7" cy="7" r="6" fill="none" stroke="#8fb0e2" stroke-width="1.2"/><path d="M5.3 4 L9.8 7 L5.3 10Z" fill="#8fb0e2"/></svg>SHAKER</div>
<div class="hd hg" style="top:376px;height:58px;background:#5a8ee0;line-height:20px"><svg width="14" height="14"><circle cx="7" cy="7" r="6" fill="none" stroke="#8fb0e2" stroke-width="1.2"/><path d="M4 5.5 L10 5.5 L7 9Z" fill="#8fb0e2"/></svg>PLUK 03</div>
<div class="hd hy" style="top:436px;height:58px;background:#f7f48e;line-height:20px"><svg width="14" height="14"><circle cx="7" cy="7" r="6" fill="none" stroke="#222" stroke-width="1.2"/><path d="M4 5.5 L10 5.5 L7 9Z" fill="#222"/></svg>PLUK 02</div>
<div class="hd hy" style="top:496px;height:94px;background:#f7f48e;line-height:20px"><svg width="14" height="14"><circle cx="7" cy="7" r="6" fill="none" stroke="#222" stroke-width="1.2"/><path d="M4 5.5 L10 5.5 L7 9Z" fill="#222"/></svg>METALIC LEA</div>
<div class="hd hg" style="top:592px;height:95px;background:#5a8ee0;line-height:20px"><svg width="14" height="14"><circle cx="7" cy="7" r="6" fill="none" stroke="#8fb0e2" stroke-width="1.2"/><path d="M4 5.5 L10 5.5 L7 9Z" fill="#8fb0e2"/></svg>PLUK 01</div>
<div class="hd hg" style="top:689px;height:57px;background:#5a8ee0;line-height:20px"><svg width="14" height="14"><circle cx="7" cy="7" r="6" fill="none" stroke="#8fb0e2" stroke-width="1.2"/><path d="M4 5.5 L10 5.5 L7 9Z" fill="#8fb0e2"/></svg>LEAD 01</div>
<div class="hd" style="top:748px;height:20px;background:#c69a3e;line-height:20px"><svg width="14" height="14"><circle cx="7" cy="7" r="6" fill="none" stroke="#2a2210" stroke-width="1.2"/><path d="M5.3 4 L9.8 7 L5.3 10Z" fill="#2a2210"/></svg>17 PMAM_Pia</div>
<div class="hd" style="top:769px;height:20px;background:#64bf38;line-height:20px"><svg width="14" height="14"><circle cx="7" cy="7" r="6" fill="none" stroke="#1a2a10" stroke-width="1.2"/><path d="M5.3 4 L9.8 7 L5.3 10Z" fill="#1a2a10"/></svg>18 174_Bm_e</div>
<div class="hd" style="top:790px;height:20px;background:#52b7a7;line-height:20px"><svg width="14" height="14"><circle cx="7" cy="7" r="6" fill="none" stroke="#10292a" stroke-width="1.2"/><path d="M5.3 4 L9.8 7 L5.3 10Z" fill="#10292a"/></svg>19 ESM_AMT</div>
<div class="hd" style="top:811px;height:20px;background:#8ff6e1;line-height:20px"><svg width="14" height="14"><circle cx="7" cy="7" r="6" fill="none" stroke="#1e3a36" stroke-width="1.2"/><path d="M5.3 4 L9.8 7 L5.3 10Z" fill="#1e3a36"/></svg>20 SMSH_Upl</div>
<div class="hd" style="top:832px;height:20px;background:#8ff6e1;line-height:20px"><svg width="14" height="14"><circle cx="7" cy="7" r="6" fill="none" stroke="#1e3a36" stroke-width="1.2"/><path d="M5.3 4 L9.8 7 L5.3 10Z" fill="#1e3a36"/></svg>21 SMSH_Do</div>
<div class="a" style="left:1438px;top:853px;width:102px;height:1px;background:#f0e050"></div>
<div class="hd" style="top:858px;height:20px;background:#b8dde6;line-height:20px;font-weight:normal;padding-left:27px"><svg width="14" height="14"><circle cx="7" cy="7" r="6" fill="none" stroke="#333" stroke-width="1.2"/><path d="M5.3 4 L9.8 7 L5.3 10Z" fill="#333"/></svg>Main</div>

<!-- right strip -->
<div class="a" style="left:1540px;top:67px;width:28px;height:812px;background:#2a2a2a"></div>
<div class="rs" style="top:69px;height:20px"><i style="left:4px"></i><i style="left:9px"></i></div>
<div class="rs" style="top:90px;height:20px"><i style="left:6px;width:4px;background:repeating-linear-gradient(#151515 0 3px,transparent 3px 4px)"></i></div>
<div class="rs" style="top:111px;height:20px"><i style="left:4px"></i><i style="left:9px"></i></div>
<div class="rs" style="top:132px;height:20px"><i style="left:4px"></i><i style="left:9px"></i></div>
<div class="rs" style="top:153px;height:20px"><i style="left:4px"></i><i style="left:9px"></i></div>
<div class="rs" style="top:174px;height:20px"><i style="left:4px"></i><i style="left:9px"></i></div>
<div class="rs" style="top:195px;height:20px"><i style="left:4px"></i><i style="left:9px"></i></div>
<div class="rs" style="top:216px;height:20px"><i style="left:4px"></i><i style="left:9px"></i></div>
<div class="rs" style="top:237px;height:20px"><i style="left:4px"></i><i style="left:9px"></i></div>
<div class="rs" style="top:258px;height:95px"><i style="left:4px"></i><i style="left:9px"></i></div>
<div class="rs" style="top:355px;height:19px"><i style="left:4px"></i><i style="left:9px"></i></div>
<div class="rs" style="top:376px;height:58px"><i style="left:4px"></i><i style="left:9px"></i></div>
<div class="rs" style="top:436px;height:58px"><i style="left:4px"></i><i style="left:9px"></i></div>
<div class="rs" style="top:496px;height:94px"><i style="left:4px"></i><i style="left:9px"></i></div>
<div class="rs" style="top:592px;height:95px"><i style="left:4px"></i><i style="left:9px"></i></div>
<div class="rs" style="top:689px;height:57px"><i style="left:4px"></i><i style="left:9px"></i></div>
<div class="rs" style="top:748px;height:20px"><i style="left:4px"></i><i style="left:9px"></i></div>
<div class="rs" style="top:769px;height:20px"><i style="left:4px"></i><i style="left:9px"></i></div>
<div class="rs" style="top:790px;height:20px"><i style="left:4px"></i><i style="left:9px"></i></div>
<div class="rs" style="top:811px;height:20px"><i style="left:4px"></i><i style="left:9px"></i></div>
<div class="rs" style="top:832px;height:20px"><i style="left:4px"></i><i style="left:9px"></i></div>
<div class="rs" style="top:858px;height:20px"><i style="left:4px"></i><i style="left:9px"></i></div>
<div class="a" style="left:1565px;top:0;width:3px;height:904px;background:#666"></div>

<!-- bottom time ruler -->
<div class="a" style="left:0;top:879px;width:1568px;height:25px;background:#333"></div>
<div class="a" style="left:0;top:901px;width:1568px;height:3px;background:#6a6a6a"></div>
<div class="tl" style="left:0">0:00</div>
<div class="tt" style="left:87px"></div><div class="tl" style="left:89px">0:20</div>
<div class="tt" style="left:173px"></div><div class="tl" style="left:175px">0:40</div>
<div class="tt" style="left:260px"></div><div class="tl" style="left:262px">1:00</div>
<div class="tt" style="left:347px"></div><div class="tl" style="left:349px">1:20</div>
<div class="tt" style="left:434px"></div><div class="tl" style="left:436px">1:40</div>
<div class="tt" style="left:521px"></div><div class="tl" style="left:523px">2:00</div>
<div class="tt" style="left:608px"></div><div class="tl" style="left:610px">2:20</div>
<div class="tt" style="left:694px"></div><div class="tl" style="left:696px">2:40</div>
<div class="tt" style="left:781px"></div><div class="tl" style="left:783px">3:00</div>
<div class="tt" style="left:868px"></div><div class="tl" style="left:870px">3:20</div>
<div class="tt" style="left:955px"></div><div class="tl" style="left:957px">3:40</div>
<div class="tt" style="left:1041px"></div><div class="tl" style="left:1043px">4:00</div>
<div class="tt" style="left:1128px"></div><div class="tl" style="left:1130px">4:20</div>
<div class="tt" style="left:1215px"></div><div class="tl" style="left:1217px">4:40</div>
<div class="tt" style="left:1302px"></div><div class="tl" style="left:1304px">5:00</div>
<div class="tt" style="left:1388px"></div><div class="tl" style="left:1390px">5:20</div>

<div class="a" style="left:1438px;top:883px;width:15px;height:15px;background:#f0a850;border:1px solid #111;box-sizing:border-box"><svg width="15" height="15"><g stroke="#2a1a05" stroke-width="1"><line x1="3" y1="5" x2="3" y2="10"/><line x1="5" y1="3" x2="5" y2="12"/><line x1="7.5" y1="5" x2="7.5" y2="10"/><line x1="10" y1="3" x2="10" y2="12"/><line x1="12" y1="6" x2="12" y2="9"/></g></svg></div>
<div class="a" style="left:1457px;top:883px;width:38px;height:15px;background:#1e1e1e;border:1px solid #111;box-sizing:border-box;font-size:11px;color:#ccc;line-height:13px;padding-left:3px"><span style="position:absolute;left:0;top:0;width:12px;height:13px;background:#2e7590"></span><span style="position:relative">1.00x</span></div>
<div class="a" style="left:1503px;top:883px;width:15px;height:15px;background:#1e1e1e;border:1px solid #111;box-sizing:border-box;font-size:11px;color:#ccc;text-align:center;line-height:13px">H</div>
<div class="a" style="left:1522px;top:883px;width:15px;height:15px;background:#1e1e1e;border:1px solid #111;box-sizing:border-box;font-size:11px;color:#ccc;text-align:center;line-height:13px">W</div>
</div></body></html>
